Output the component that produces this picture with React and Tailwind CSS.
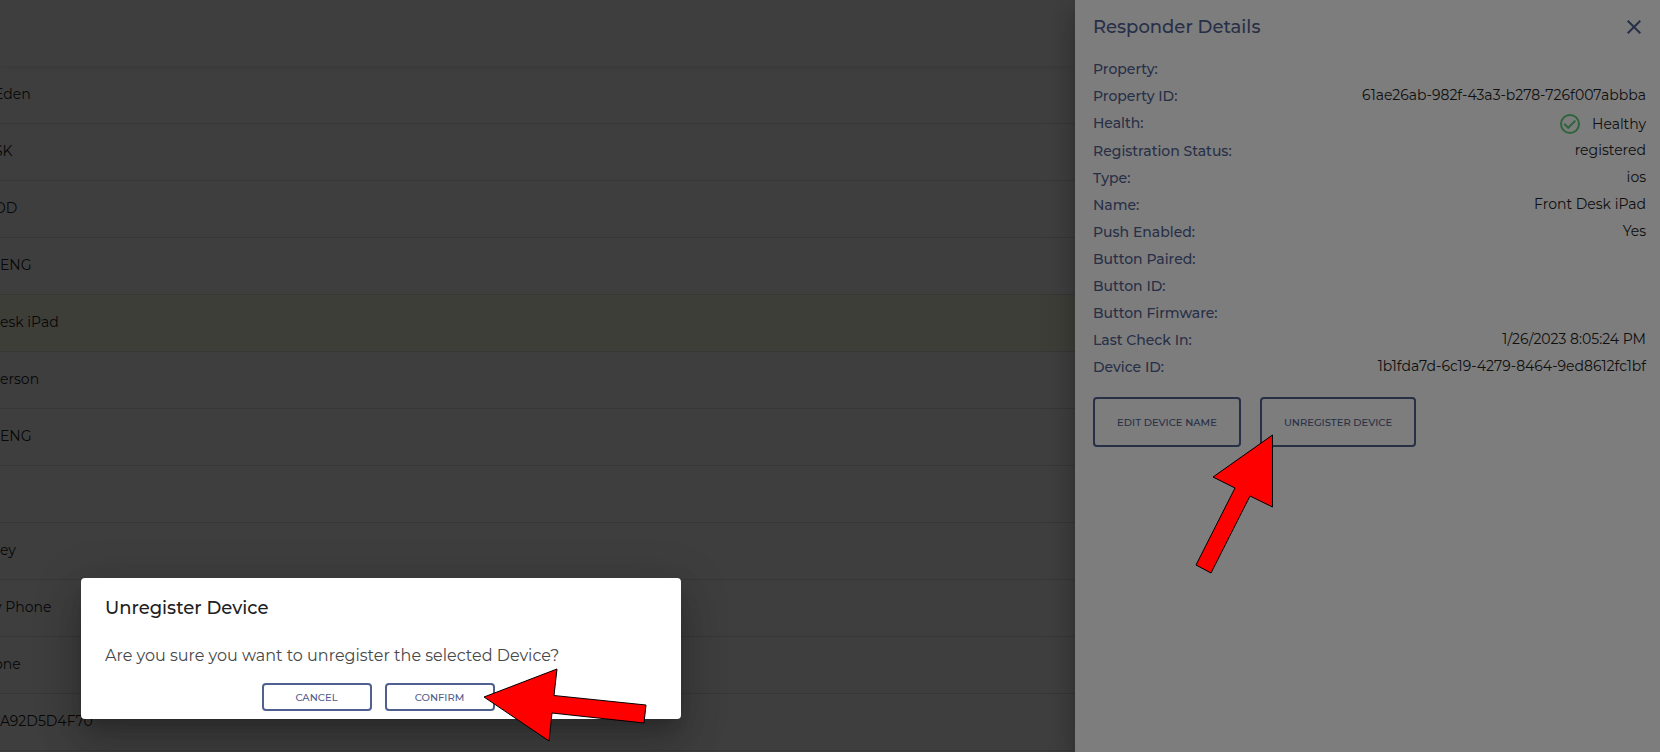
import React, { useState } from 'react';

const FONT = "font-['Montserrat','Inter',sans-serif]";

// "cut" rows start a little outside the left edge of the scrolled table
const rows = [
  { name: 'Eden', cut: true },
  { name: 'SK', cut: true },
  { name: 'OD', cut: true },
  { name: 'ENG' },
  { name: 'esk iPad', selected: true },
  { name: 'erson' },
  { name: 'ENG' },
  { name: '' },
  { name: 'ey' },
  { name: 'y Phone', cut: true },
  { name: 'one', cut: true },
  { name: 'A92D5D4F70' },
];

const details = [
  { label: 'Property:', value: '' },
  { label: 'Property ID:', value: '61ae26ab-982f-43a3-b278-726f007abbba' },
  { label: 'Health:', value: 'Healthy', healthy: true },
  { label: 'Registration Status:', value: 'registered' },
  { label: 'Type:', value: 'ios' },
  { label: 'Name:', value: 'Front Desk iPad' },
  { label: 'Push Enabled:', value: 'Yes' },
  { label: 'Button Paired:', value: '' },
  { label: 'Button ID:', value: '' },
  { label: 'Button Firmware:', value: '' },
  { label: 'Last Check In:', value: '1/26/2023 8:05:24 PM' },
  { label: 'Device ID:', value: '1b1fda7d-6c19-4279-8464-9ed8612fc1bf' },
];

const HealthyIcon = () => (
  <svg width="20" height="20" viewBox="0 0 20 20" fill="none" stroke="#5dc878" strokeWidth="2" aria-hidden="true">
    <circle cx="10" cy="10" r="9" />
    <path d="M4.2 9.8l4 4L15.4 6.6" />
  </svg>
);

const CloseIcon = () => (
  <svg width="14" height="14" viewBox="0 0 14 14" stroke="currentColor" strokeWidth="2" aria-hidden="true">
    <path d="M.7.7l12.6 12.6M13.3.7L.7 13.3" />
  </svg>
);

const Arrow = ({ width, height, points, className }) => (
  <svg width={width} height={height} className={`absolute z-50 pointer-events-none max-w-none overflow-visible ${className}`} aria-hidden="true">
    <polygon points={points} fill="#ff0000" stroke="#000000" strokeWidth="1" />
  </svg>
);

const DeviceTable = () => (
  <table className="w-full border-collapse">
    <tbody>
      {rows.map((row, i) => (
        <tr key={i} className={`h-[57px] border-b border-[#dcdcdc] ${row.selected ? 'bg-[#f8f8e4]' : ''}`}>
          <td className="p-0 text-[14px] text-[#212121] whitespace-nowrap">
            <span className={row.cut ? '-ml-1.5' : ''}>{row.name}</span>
          </td>
        </tr>
      ))}
    </tbody>
  </table>
);

const ResponderDetails = () => (
  <aside className="relative w-[585px] shrink-0 bg-[#fafafa] pl-[18px] pr-[14px] shadow-[0_8px_10px_-5px_rgba(0,0,0,0.2),0_16px_24px_2px_rgba(0,0,0,0.14),0_6px_30px_5px_rgba(0,0,0,0.12)]">
    <div className="flex items-center justify-between h-[54px] pr-[5px] text-[#50608f]">
      <h2 className="text-[18px] font-medium">Responder Details</h2>
      <button type="button" aria-label="Close" className="cursor-pointer"><CloseIcon /></button>
    </div>
    <dl className="pt-0.5 text-[14px] leading-[27px]">
      {details.map(item => (
        <div key={item.label} className={`flex justify-between ${item.healthy ? 'h-7' : 'h-[27px]'}`}>
          <dt className="font-medium text-[#50608f]">{item.label}</dt>
          <dd className={`flex items-center gap-3 text-[#212121] ${item.healthy ? '' : 'pb-0.5'}`}>
            {item.healthy && <HealthyIcon />}
            {item.value}
          </dd>
        </div>
      ))}
    </dl>
    <div className="flex gap-[19px] mt-4 text-[10px] font-medium text-[#50608f]">
      <button type="button" className="w-[148px] h-[50px] border-2 border-[#50608f] rounded cursor-pointer">EDIT DEVICE NAME</button>
      <div className="relative">
        <button type="button" className="w-[156px] h-[50px] border-2 border-[#50608f] rounded cursor-pointer">UNREGISTER DEVICE</button>
        <Arrow width={79} height={141} className="-left-[65px] top-[37px]" points="77.5,1 18,43 40,54 1,131 16,139 55,62 77.5,73" />
      </div>
    </div>
  </aside>
);

const ConfirmDialog = ({ onClose }) => (
  <div role="dialog" aria-labelledby="dialog-title" className="absolute left-[81px] bottom-[33px] z-50 w-[600px] h-[141px] px-6 bg-white rounded shadow-[0_11px_15px_-7px_rgba(0,0,0,0.2),0_24px_38px_3px_rgba(0,0,0,0.14),0_9px_46px_8px_rgba(0,0,0,0.12)]">
    <h2 id="dialog-title" className="pt-4 text-[18px] leading-7 font-medium text-[#212121]">Unregister Device</h2>
    <p className="pt-5 text-[16px] leading-7 text-[#484848]">Are you sure you want to unregister the selected Device?</p>
    <div className="flex justify-center gap-[13px] pt-[13px] pr-1.5 text-[10px] font-medium text-[#50608f]">
      <button type="button" onClick={onClose} className="w-[110px] h-7 border-2 border-[#50608f] rounded cursor-pointer">CANCEL</button>
      <button type="button" onClick={onClose} className="w-[110px] h-7 border-2 border-[#50608f] rounded cursor-pointer">CONFIRM</button>
    </div>
    <Arrow width={164} height={75} className="right-[34px] top-[89px]" points="1,30 74,2 71,28.5 163,38 161,56 69,46 66,74" />
  </div>
);

export default function App() {
  const [open, setOpen] = useState(true);

  return (
    <div className={`relative flex h-screen overflow-hidden bg-[#fafafa] ${FONT}`}>
      <main className="relative flex-1 min-w-0 overflow-hidden">
        <header className="h-[66px] shadow-[0_2px_5px_rgba(0,0,0,0.08)]" />
        <DeviceTable />
        {/* backdrop of the drawer */}
        <div className="absolute inset-0 bg-black/50" />
      </main>
      <ResponderDetails />
      {open && (
        <>
          <div className="absolute inset-0 z-40 bg-black/50" />
          <ConfirmDialog onClose={() => setOpen(false)} />
        </>
      )}
    </div>
  );
}
